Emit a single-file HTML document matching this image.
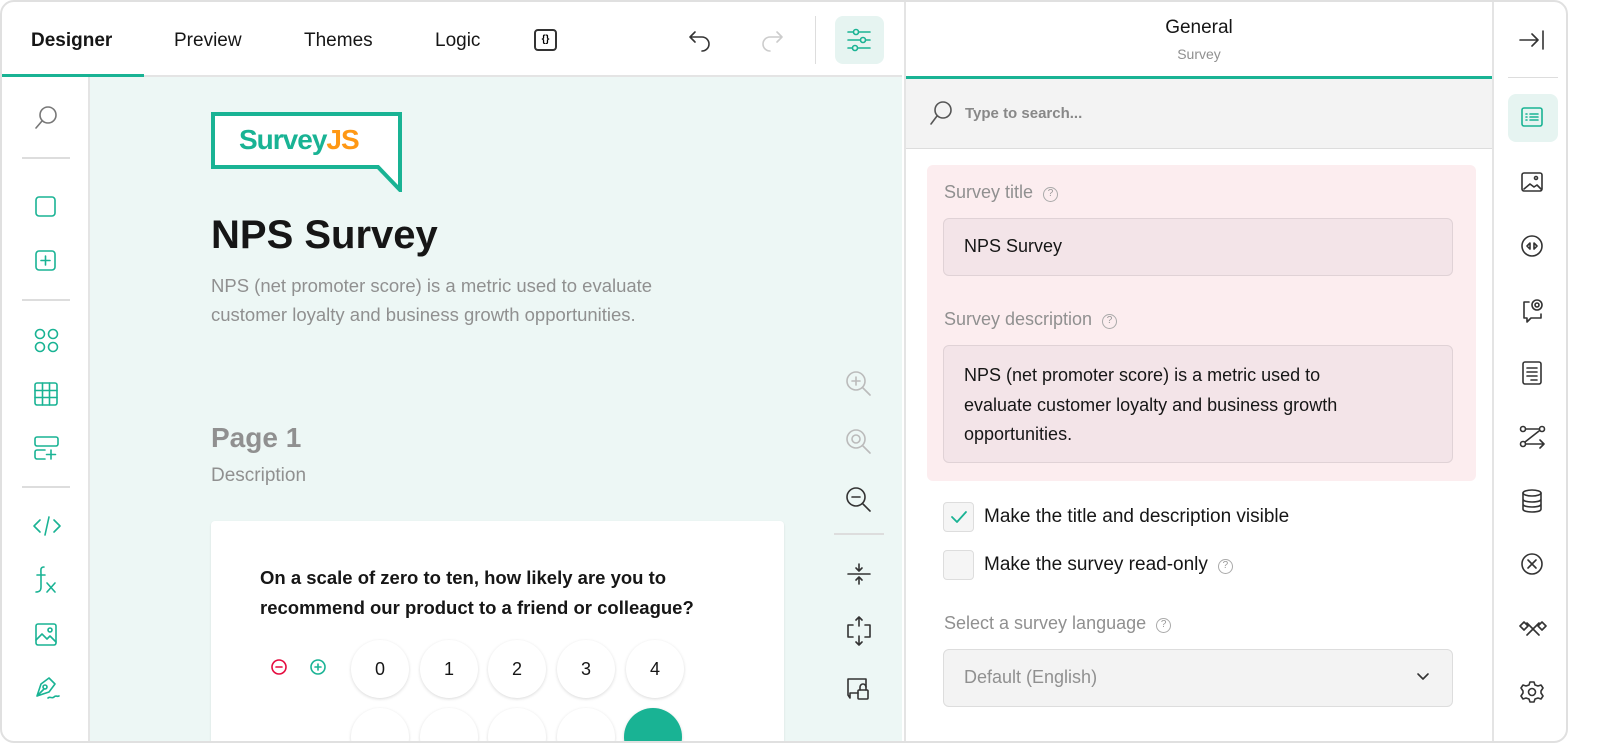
<!DOCTYPE html>
<html><head><meta charset="utf-8"><style>
*{box-sizing:border-box;margin:0;padding:0}
body{width:1600px;height:744px;background:#fff;font-family:"Liberation Sans",sans-serif;overflow:hidden;position:relative}
.frame{position:absolute;left:0;top:0;width:1568px;height:743px;border:2px solid #e0e0e0;border-radius:14px;overflow:hidden;background:#fff}
.abs{position:absolute}
.top{left:0;top:0;width:900px;height:75px;border-bottom:2px solid #e4e4e4}
.tab{position:absolute;top:28px;font-size:19px;color:#161616}
svg{position:absolute;fill:none;stroke-linecap:round;stroke-linejoin:round}
.g{stroke:#19b394;stroke-width:1.6}
.k{stroke:#555;stroke-width:1.6}
.l{stroke:#aaa;stroke-width:1.6}
.left{left:0;top:75px;width:88px;height:670px;border-right:2px solid #e4e4e4}
.hr{position:absolute;left:20px;width:48px;height:2px;background:#ddd}
.main{left:88px;top:75px;width:812px;height:670px;background:#edf7f5}
.card{left:209px;top:519px;width:573px;height:240px;background:#fff;border-radius:4px;box-shadow:0 1px 2px rgba(0,0,0,.1)}
.rate{position:absolute;top:638px;width:58px;height:58px;border-radius:50%;background:#fff;box-shadow:0 1px 3px rgba(0,0,0,.15);font-size:18px;text-align:center;line-height:58px;color:#161616}
.rp{left:902px;top:0;width:588px;height:745px;border-left:2px solid #e4e4e4;background:#fff}
.rs{left:1490px;top:0;width:78px;height:745px;border-left:2px solid #e4e4e4}
.lbl{position:absolute;left:942px;font-size:18px;color:#909090}
.inp{position:absolute;left:941px;width:510px;background:#f3e4e8;border:1px solid #e0d2d6;border-radius:6px;font-size:18px;color:#161616}
.q{display:inline-block;width:15px;height:15px;border:1.5px solid #aaa;border-radius:50%;font-size:10px;line-height:12px;text-align:center;color:#999;margin-left:10px;vertical-align:2px}
</style></head><body>
<div class="frame">
<div class="abs top">
 <div class="tab" style="left:29px;font-weight:bold">Designer</div>
 <div class="abs" style="left:0;top:72px;width:142px;height:3px;background:#19b394"></div>
 <div class="tab" style="left:172px">Preview</div>
 <div class="tab" style="left:302px">Themes</div>
 <div class="tab" style="left:433px">Logic</div>
 <div class="abs" style="left:532px;top:27px;width:23px;height:22px;border:2px solid #333;border-radius:4px;font-size:10px;text-align:center;line-height:17px;font-weight:bold">{}</div>
 <svg style="left:686px;top:26px" width="26" height="24"><path class="k" d="M7 4 2 9l5 5M2 9h12a7 7 0 0 1 0 14" style="stroke:#333"/></svg>
 <svg style="left:756px;top:26px" width="26" height="24"><path class="l" d="M19 4l5 5-5 5M24 9H12a7 7 0 0 0 0 14" style="stroke:#ccc"/></svg>
 <div class="abs" style="left:813px;top:14px;width:1px;height:48px;background:#ddd"></div>
 <div class="abs" style="left:833px;top:14px;width:49px;height:48px;background:#e6f4f1;border-radius:8px"></div>
 <svg style="left:844px;top:26px" width="28" height="24"><path class="g" d="M2 4h22M2 12h22M2 20h22"/><circle class="g" cx="10" cy="4" r="2.5" fill="#e6f4f1"/><circle class="g" cx="17" cy="12" r="2.5" fill="#e6f4f1"/><circle class="g" cx="9" cy="20" r="2.5" fill="#e6f4f1"/></svg>
</div>
<div class="abs left">
 <svg style="left:32px;top:28px" width="26" height="26"><circle class="k" cx="14" cy="10" r="8" style="stroke:#777"/><path class="k" d="M8 16 2 23" style="stroke:#777"/></svg>
 <div class="hr" style="top:80px"></div>
 <svg style="left:32px;top:118px" width="24" height="24"><rect class="g" x="2" y="2" width="19" height="19" rx="3"/></svg>
 <svg style="left:32px;top:172px" width="24" height="24"><rect class="g" x="2" y="2" width="19" height="19" rx="3"/><path class="g" d="M11.5 7v9M7 11.5h9"/></svg>
 <div class="hr" style="top:222px"></div>
 <svg style="left:31px;top:250px" width="28" height="28"><circle class="g" cx="7" cy="7" r="4.5"/><circle class="g" cx="20" cy="7" r="4.5"/><circle class="g" cx="7" cy="20" r="4.5"/><circle class="g" cx="20" cy="20" r="4.5"/></svg>
 <svg style="left:31px;top:304px" width="26" height="26"><rect class="g" x="2" y="2" width="22" height="22" rx="2"/><path class="g" d="M2 9.5h22M2 16.5h22M9.5 2v22M16.5 2v22"/></svg>
 <svg style="left:31px;top:358px" width="28" height="28"><rect class="g" x="2" y="2" width="23" height="9" rx="2"/><path class="g" d="M12 15H4a2 2 0 0 0-2 2v5a2 2 0 0 0 2 2h8M18 15v9M13.5 19.5h9"/></svg>
 <div class="hr" style="top:409px"></div>
 <svg style="left:30px;top:438px" width="30" height="22"><path class="g" d="M8 5 2 11l6 6M22 5l6 6-6 6M17 2l-4 18"/></svg>
 <svg style="left:32px;top:488px" width="26" height="32"><path class="g" d="M10 2c-4 0-3 3-3 8v12c0 4-2 5-5 5M3 10h8"/><path class="g" d="M13 18l8 9M21 18l-8 9"/></svg>
 <svg style="left:32px;top:545px" width="26" height="26"><rect class="g" x="2" y="2" width="20" height="21" rx="2"/><path class="g" d="M2 18l6-6 5 5 3-3 6 6"/><circle class="g" cx="16" cy="8" r="2"/></svg>
 <svg style="left:31px;top:597px" width="28" height="28"><path class="g" d="M4 22 8 10 16 4l6 6-6 8zM4 22l7-7"/><circle class="g" cx="12" cy="13" r="2"/><path class="g" d="M15 24c2-2 4 1 6-1s3 0 5-1"/></svg>
</div>
<div class="abs main">
 <svg style="left:121px;top:35px" width="192" height="80"><path fill="#fff" stroke="#19b394" stroke-width="4" stroke-linejoin="miter" d="M2 2h187v76l-22-23H2z"/></svg>
 <div class="abs" style="left:149px;top:47px;font-size:28px;font-weight:bold;color:#19b394;letter-spacing:-1px">Survey<span style="color:#ff9814">JS</span></div>
 <div class="abs" style="left:121px;top:136px;font-size:40px;font-weight:bold;color:#161616">NPS Survey</div>
 <div class="abs" style="left:121px;top:194px;font-size:18.5px;line-height:29px;color:#909090;width:500px">NPS (net promoter score) is a metric used to evaluate customer loyalty and business growth opportunities.</div>
 <div class="abs" style="left:121px;top:345px;font-size:28px;font-weight:bold;color:#909090">Page 1</div>
 <div class="abs" style="left:121px;top:388px;font-size:19px;color:#909090">Description</div>
 <svg style="left:754px;top:292px" width="30" height="30"><circle class="l" cx="12" cy="12" r="9" style="stroke:#bbb"/><path class="l" d="M19 19l7 7M12 8v8M8 12h8" style="stroke:#bbb"/></svg>
 <svg style="left:754px;top:350px" width="30" height="30"><circle class="l" cx="12" cy="12" r="9" style="stroke:#bbb"/><circle class="l" cx="12" cy="12" r="4" style="stroke:#bbb"/><path class="l" d="M19 19l7 7" style="stroke:#bbb"/></svg>
 <svg style="left:754px;top:408px" width="30" height="30"><circle class="k" cx="12" cy="12" r="9" style="stroke:#333"/><path class="k" d="M19 19l7 7M8 12h8" style="stroke:#333"/></svg>
 <div class="abs" style="left:744px;top:456px;width:50px;height:2px;background:#ddd"></div>
 <svg style="left:754px;top:483px" width="30" height="30"><path class="k" d="M4 14h22M15 4v7l-3-3M15 11l3-3M15 24v-7l-3 3M15 17l3 3" style="stroke:#333"/></svg>
 <svg style="left:754px;top:538px" width="30" height="32"><path class="k" d="M15 2v9M12 5l3-3 3 3M15 30v-9M12 27l3 3 3-3M9 10H4v12h5M21 10h5v12h-5" style="stroke:#333"/></svg>
 <svg style="left:754px;top:596px" width="30" height="32"><path class="k" d="M14 20H6v5l-2-3V6h18v8" style="stroke:#333"/><rect class="k" x="14" y="17" width="10" height="9" rx="1" style="stroke:#333"/><path class="k" d="M16 17v-3a3 3 0 0 1 6 0v3" style="stroke:#333"/></svg>
</div>
<div class="abs card">
 <div class="abs" style="left:49px;top:42px;font-size:18.5px;font-weight:bold;line-height:30px;color:#161616;width:500px">On a scale of zero to ten, how likely are you to recommend our product to a friend or colleague?</div>
 <svg style="left:59px;top:137px" width="18" height="18"><circle cx="9" cy="9" r="7" stroke="#e50a3e" stroke-width="1.6"/><path d="M6 9h6" stroke="#e50a3e" stroke-width="1.6"/></svg>
 <svg style="left:98px;top:137px" width="18" height="18"><circle cx="9" cy="9" r="7" stroke="#19b394" stroke-width="1.6"/><path d="M6 9h6M9 6v6" stroke="#19b394" stroke-width="1.6"/></svg>
</div>
<div class="rate" style="left:349px">0</div><div class="rate" style="left:418px">1</div><div class="rate" style="left:486px">2</div><div class="rate" style="left:555px">3</div><div class="rate" style="left:624px">4</div>
<div class="rate" style="left:349px;top:706px"></div><div class="rate" style="left:418px;top:706px"></div><div class="rate" style="left:486px;top:706px"></div><div class="rate" style="left:555px;top:706px"></div><div class="rate" style="left:622px;top:706px;background:#19b394"></div>
<div class="abs rp">
 <div class="abs" style="left:0;top:15px;width:586px;text-align:center;font-size:19px;color:#161616">General</div>
 <div class="abs" style="left:0;top:44px;width:586px;text-align:center;font-size:14px;color:#909090">Survey</div>
 <div class="abs" style="left:0;top:74px;width:588px;height:3px;background:#19b394"></div>
 <div class="abs" style="left:0;top:77px;width:588px;height:70px;background:#f3f3f3;border-bottom:1px solid #ddd"></div>
 <svg style="left:22px;top:98px" width="26" height="26"><circle class="k" cx="15" cy="10" r="8"/><path class="k" d="M9 16 3 24"/></svg>
 <div class="abs" style="left:59px;top:103px;font-size:15px;font-weight:bold;color:#888">Type to search...</div>
 <div class="abs" style="left:21px;top:163px;width:549px;height:316px;background:#fcedef;border-radius:6px"></div>
</div>
<div class="lbl" style="top:180px">Survey title<span class="q">?</span></div>
<div class="inp" style="top:216px;height:58px;padding:17px 20px">NPS Survey</div>
<div class="lbl" style="top:307px">Survey description<span class="q">?</span></div>
<div class="inp" style="top:343px;height:118px;padding:15px 20px;line-height:29.5px"><div style="width:412px">NPS (net promoter score) is a metric used to evaluate customer loyalty and business growth opportunities.</div></div>
<div class="abs" style="left:941px;top:500px;width:31px;height:30px;border:1px solid #ddd;border-radius:4px;background:#f5f5f5"></div>
<svg style="left:947px;top:507px" width="20" height="16"><path d="M3 8l5 5 9-10" stroke="#19b394" stroke-width="1.8"/></svg>
<div class="abs" style="left:982px;top:504px;font-size:19px;color:#161616">Make the title and description visible</div>
<div class="abs" style="left:941px;top:548px;width:31px;height:30px;border:1px solid #ddd;border-radius:4px;background:#f5f5f5"></div>
<div class="abs" style="left:982px;top:552px;font-size:19px;color:#161616">Make the survey read-only<span class="q">?</span></div>
<div class="lbl" style="top:611px">Select a survey language<span class="q">?</span></div>
<div class="abs" style="left:941px;top:647px;width:510px;height:58px;background:#f3f3f3;border:1px solid #ddd;border-radius:6px;padding:17px 20px;font-size:18px;color:#909090">Default (English)</div>
<svg style="left:1414px;top:670px" width="14" height="10"><path d="M2 2l5 5 5-5" stroke="#333" stroke-width="1.6"/></svg>
<div class="abs rs">
 <svg style="left:24px;top:26px" width="28" height="24"><path d="M2 12h18M14 6l6 6-6 6M25 3v18" stroke="#333" stroke-width="1.6"/></svg>
 <div class="abs" style="left:14px;top:75px;width:50px;height:1px;background:#ddd"></div>
 <div class="abs" style="left:14px;top:92px;width:50px;height:48px;background:#e6f4f1;border-radius:8px"></div>
 <svg style="left:26px;top:104px" width="26" height="24"><rect class="g" x="2" y="2" width="20" height="18" rx="2"/><path class="g" d="M6 8h1M10 8h8M6 11h1M10 11h8M6 14h1M10 14h8"/></svg>
 <svg style="left:26px;top:168px" width="26" height="26"><rect class="k" x="2" y="3" width="20" height="18" rx="2" style="stroke:#333"/><path class="k" d="M4 19l6-5 4 3 3-2 4 4" style="stroke:#333"/><circle class="k" cx="16" cy="8" r="1.5" style="stroke:#333"/></svg>
 <svg style="left:26px;top:232px" width="26" height="26"><circle class="k" cx="12" cy="12" r="10" style="stroke:#333"/><path class="k" d="M10 9l-3 3 3 3zM14 9l3 3-3 3z" style="stroke:#333"/></svg>
 <svg style="left:26px;top:294px" width="28" height="30"><path class="k" d="M9 6H4v16h3v4l4-4h10v-4" style="stroke:#333"/><circle class="k" cx="17" cy="9" r="5" style="stroke:#333"/><circle class="k" cx="17" cy="9" r="2" style="stroke:#333"/></svg>
 <svg style="left:26px;top:358px" width="26" height="28"><rect class="k" x="3" y="2" width="18" height="22" rx="2" style="stroke:#333"/><path class="k" d="M7 8h10M7 12h10M7 16h10M11 20h6" style="stroke:#333"/></svg>
 <svg style="left:24px;top:422px" width="30" height="26"><circle class="k" cx="5" cy="5" r="2.5" style="stroke:#333"/><circle class="k" cx="5" cy="20" r="2.5" style="stroke:#333"/><circle class="k" cx="24" cy="5" r="2.5" style="stroke:#333"/><path class="k" d="M8 5h13M21 7 7 18M8 20h18M22 16l4 4-4 4" style="stroke:#333"/></svg>
 <svg style="left:26px;top:486px" width="26" height="28"><ellipse class="k" cx="12" cy="5" rx="9" ry="3" style="stroke:#333"/><path class="k" d="M3 5v16c0 2 4 3 9 3s9-1 9-3V5M3 11c0 2 4 3 9 3s9-1 9-3M3 16c0 2 4 3 9 3s9-1 9-3" style="stroke:#333"/></svg>
 <svg style="left:26px;top:550px" width="26" height="26"><circle class="k" cx="12" cy="12" r="10" style="stroke:#333"/><path class="k" d="M8 8l8 8M16 8l-8 8" style="stroke:#333"/></svg>
 <svg style="left:24px;top:614px" width="30" height="24"><path class="k" d="M2 10l4-4 4 4-4 4zM28 10l-4-4-4 4 4 4zM9 7l12 12M21 7 9 19" style="stroke:#333"/></svg>
 <svg style="left:26px;top:678px" width="26" height="26"><circle class="k" cx="12" cy="12" r="3.5" style="stroke:#333"/><path class="k" d="M10 2h4l1 3 3 1 3-1 2 3-2 3v2l2 3-2 3-3-1-3 1-1 3h-4l-1-3-3-1-3 1-2-3 2-3v-2L1 8l2-3 3 1 3-1z" style="stroke:#333"/></svg>
</div>
</div>
</body></html>
